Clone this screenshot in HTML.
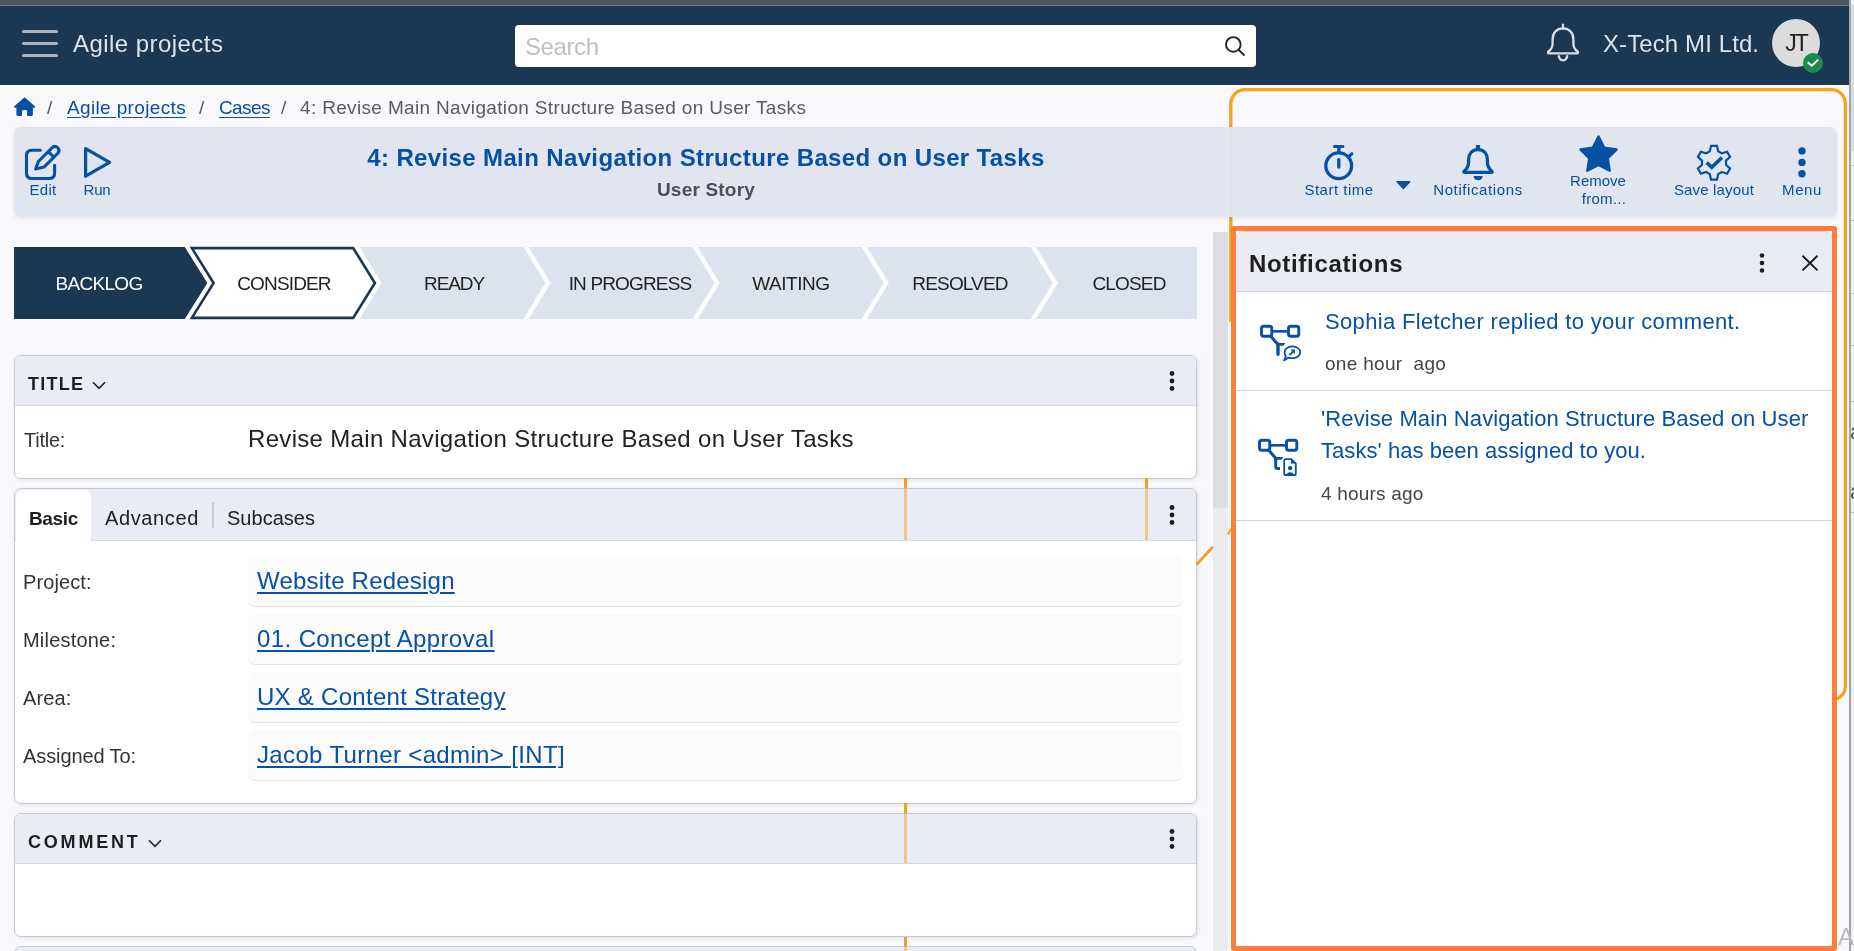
<!DOCTYPE html>
<html><head><meta charset="utf-8"><title>Agile projects</title>
<style>
html,body{margin:0;padding:0;width:1854px;height:951px;overflow:hidden;background:#f9f9fd;font-family:"Liberation Sans",sans-serif;}
.t{position:absolute;white-space:pre;will-change:transform;}
svg{overflow:visible}
</style></head><body>
<div style="position:absolute;left:0px;top:0px;width:1849px;height:5px;background:#4a5964"></div>
<div style="position:absolute;left:0px;top:5px;width:1849px;height:1px;background:#74818a"></div>
<div style="position:absolute;left:0px;top:6px;width:1849px;height:79px;background:#1a3853"></div>
<div style="position:absolute;left:0px;top:85px;width:1849px;height:1px;background:#ffffff"></div>
<div style="position:absolute;left:21.5px;top:30.0px;width:36px;height:3px;background:#a9b4bf;border-radius:2px"></div>
<div style="position:absolute;left:21.5px;top:42.0px;width:36px;height:3px;background:#a9b4bf;border-radius:2px"></div>
<div style="position:absolute;left:21.5px;top:54.0px;width:36px;height:3px;background:#a9b4bf;border-radius:2px"></div>
<div class="t" style="left:73.0px;top:31.7px;font-size:24px;line-height:24px;color:#dde3ea;letter-spacing:0.45px;">Agile projects</div>
<div style="position:absolute;left:515px;top:25px;width:741px;height:42px;background:#fff;border-radius:4px"></div>
<div class="t" style="left:525.0px;top:34.7px;font-size:24px;line-height:24px;color:#bfbfbf;letter-spacing:-0.4px;">Search</div>
<svg style="position:absolute;left:1220px;top:32px;" width="30" height="30" viewBox="0 0 30 30"><circle cx="13.3" cy="12.4" r="7.3" fill="none" stroke="#222" stroke-width="1.9"/><line x1="18.6" y1="17.7" x2="24.5" y2="23.5" stroke="#222" stroke-width="1.9"/></svg>
<svg style="position:absolute;left:1545px;top:22px;" width="36" height="42" viewBox="0 0 36 42"><path d="M18 6.4 C11.5 6.4 7.6 11 7.6 17.5 V21.5 C7.6 25.5 5.5 28 3.5 29.5 C2.6 30.2 2.9 31.4 4 31.4 H32 C33.1 31.4 33.4 30.2 32.5 29.5 C30.5 28 28.4 25.5 28.4 21.5 V17.5 C28.4 11 24.5 6.4 18 6.4 Z" fill="none" stroke="#d8dee5" stroke-width="2.3" stroke-linejoin="round"/><line x1="18" y1="2.6" x2="18" y2="6.4" stroke="#d8dee5" stroke-width="2.3" stroke-linecap="round"/><path d="M13.8 34.2 C14.2 37 15.9 38.3 18 38.3 C20.1 38.3 21.8 37 22.2 34.2" fill="none" stroke="#d8dee5" stroke-width="2.3" stroke-linecap="round"/></svg>
<div class="t" style="left:1603.0px;top:31.7px;font-size:24px;line-height:24px;color:#dde3ea;letter-spacing:0.1px;">X-Tech MI Ltd.</div>
<div style="position:absolute;left:1772px;top:19px;width:48px;height:48px;background:#dcdcdc;border-radius:50%"></div>
<div class="t" style="left:1765.5px;width:60px;text-align:center;top:31.5px;font-size:23px;line-height:23px;color:#1e1e1e;letter-spacing:-2px;">JT</div>
<div style="position:absolute;left:1803.2px;top:53.3px;width:20px;height:20px;background:#1c8a50;border-radius:50%"></div>
<svg style="position:absolute;left:1803.2px;top:53.3px;" width="20" height="20" viewBox="0 0 20 20"><path d="M5.3 9.8 L8.7 12.7 L14.6 7.2" fill="none" stroke="#fff" stroke-width="1.9" stroke-linecap="round" stroke-linejoin="round"/></svg>
<div style="position:absolute;left:1849px;top:0px;width:5px;height:951px;background:#f1f1f4"></div>
<div style="position:absolute;left:1851px;top:5px;width:3px;height:146px;background:#dcdce2"></div>
<div style="position:absolute;left:1849px;top:0px;width:2px;height:951px;background:#a4a4a8"></div>
<svg style="position:absolute;left:13px;top:96px;" width="24" height="22" viewBox="0 0 24 22"><path d="M11.6 1.2 L1.3 10.2 C0.6 10.9 1 11.8 2 11.8 H3.4 V18.6 C3.4 19.4 4 20 4.8 20 H9 V15.5 C9 14.6 9.7 14 10.5 14 H12.6 C13.4 14 14.1 14.6 14.1 15.5 V20 H18.5 C19.3 20 19.9 19.4 19.9 18.6 V11.8 H21.3 C22.3 11.8 22.6 10.9 21.9 10.2 Z" fill="#0650a6"/></svg>
<div class="t" style="left:47.0px;top:97.9px;font-size:19px;line-height:19px;color:#5a5a5a;">/</div>
<div class="t" style="left:67.0px;top:97.9px;font-size:19px;line-height:19px;color:#0650a6;letter-spacing:0.36px;text-decoration:underline;text-underline-offset:3px;">Agile projects</div>
<div class="t" style="left:199.0px;top:97.9px;font-size:19px;line-height:19px;color:#5a5a5a;">/</div>
<div class="t" style="left:218.5px;top:97.9px;font-size:19px;line-height:19px;color:#0650a6;letter-spacing:-0.6px;text-decoration:underline;text-underline-offset:3px;">Cases</div>
<div class="t" style="left:281.0px;top:97.9px;font-size:19px;line-height:19px;color:#5a5a5a;">/</div>
<div class="t" style="left:300.0px;top:97.9px;font-size:19px;line-height:19px;color:#5b5b5b;letter-spacing:0.34px;">4: Revise Main Navigation Structure Based on User Tasks</div>
<svg style="position:absolute;left:0px;top:0px;pointer-events:none" width="1854" height="951" viewBox="0 0 1854 951"><path d="M1230.8 322 V103.7 A14 14 0 0 1 1244.8 89.7 H1831.4 A14 14 0 0 1 1845.4 103.7 V686 A14 14 0 0 1 1831.4 700 H1820" fill="none" stroke="#f5a21e" stroke-width="3.3"/></svg>
<div style="position:absolute;left:14px;top:127px;width:1823px;height:90px;background:#e1e5ef;border-radius:7px;box-shadow:0 2px 4px rgba(40,50,80,0.10)"></div>
<div style="position:absolute;left:1229px;top:127px;width:3px;height:90px;background:#dfe1e7"></div>
<svg style="position:absolute;left:20px;top:140px;" width="46" height="44" viewBox="0 0 46 44"><path d="M20.4 10.3 H11.8 C8.5 10.3 6.5 12.3 6.5 15.6 V33.2 C6.5 36.5 8.5 38.5 11.8 38.5 H29.3 C32.6 38.5 34.6 36.5 34.6 33.2 V25.2" fill="none" stroke="#0650a6" stroke-width="3.1" stroke-linecap="round"/><path d="M32.5 7.4 A4 4 0 0 1 38.1 13.0 L24.0 27.1 L15.6 29.0 L18.4 21.5 Z" fill="none" stroke="#0650a6" stroke-width="3.1" stroke-linejoin="round"/><line x1="28.3" y1="11.6" x2="33.9" y2="17.2" stroke="#0650a6" stroke-width="3"/></svg>
<div class="t" style="left:13.0px;width:60px;text-align:center;top:182.3px;font-size:15px;line-height:15px;color:#0650a6;letter-spacing:0.3px;">Edit</div>
<svg style="position:absolute;left:78px;top:142px;" width="40" height="40" viewBox="0 0 40 40"><path d="M7.6 6.6 L31.6 20.4 L7.6 34.2 Z" fill="none" stroke="#0650a6" stroke-width="3.2" stroke-linejoin="round"/></svg>
<div class="t" style="left:67.0px;width:60px;text-align:center;top:182.3px;font-size:15px;line-height:15px;color:#0650a6;letter-spacing:-0.2px;">Run</div>
<div class="t" style="left:256.3px;width:900px;text-align:center;top:146.0px;font-size:24px;line-height:24px;color:#0650a6;font-weight:700;letter-spacing:0.37px;">4: Revise Main Navigation Structure Based on User Tasks</div>
<div class="t" style="left:556.4px;width:300px;text-align:center;top:179.9px;font-size:19px;line-height:19px;color:#4b4f56;font-weight:700;letter-spacing:0.2px;">User Story</div>
<svg style="position:absolute;left:1318px;top:140px;" width="44" height="44" viewBox="0 0 44 44"><circle cx="20.7" cy="25.8" r="12.9" fill="none" stroke="#0650a6" stroke-width="3.3"/><line x1="16.5" y1="6.4" x2="24.9" y2="6.4" stroke="#0650a6" stroke-width="3" stroke-linecap="round"/><line x1="20.85" y1="6.4" x2="20.85" y2="12" stroke="#0650a6" stroke-width="3.4"/><line x1="20.8" y1="19.6" x2="20.8" y2="27.1" stroke="#0650a6" stroke-width="3.3" stroke-linecap="round"/><line x1="30.8" y1="16.6" x2="33.8" y2="13.8" stroke="#0650a6" stroke-width="3.2" stroke-linecap="round"/></svg>
<div class="t" style="left:1278.5px;width:120px;text-align:center;top:182.3px;font-size:15px;line-height:15px;color:#0650a6;letter-spacing:0.5px;">Start time</div>
<svg style="position:absolute;left:1395px;top:180px;" width="17" height="10" viewBox="0 0 17 10"><path d="M2 1.7 H14.8 L8.4 8.4 Z" fill="#0650a6" stroke="#0650a6" stroke-width="1.4" stroke-linejoin="round"/></svg>
<svg style="position:absolute;left:1456px;top:140px;" width="44" height="44" viewBox="0 0 44 44"><path d="M22 9.6 C15.8 9.6 12.6 14 12.6 19.5 V22.5 C12.6 26.5 10.2 29.3 8.3 31.2 C7.5 32 7.6 32.3 8.6 32.3 H35.4 C36.4 32.3 36.5 32 35.7 31.2 C33.8 29.3 31.4 26.5 31.4 22.5 V19.5 C31.4 14 28.2 9.6 22 9.6 Z" fill="none" stroke="#0650a6" stroke-width="3.3" stroke-linejoin="round"/><rect x="19.9" y="4.9" width="4.2" height="5" rx="0.6" fill="#0650a6"/><path d="M17.6 35.9 H26.6 C26.6 38.5 24.6 40.3 22.1 40.3 C19.6 40.3 17.6 38.5 17.6 35.9 Z" fill="#0650a6"/></svg>
<div class="t" style="left:1408.0px;width:140px;text-align:center;top:182.3px;font-size:15px;line-height:15px;color:#0650a6;letter-spacing:0.6px;">Notifications</div>
<svg style="position:absolute;left:1578px;top:134px;" width="42" height="40" viewBox="0 0 42 40"><path d="M20.5 2.5 L26.2 13.8 L38.5 15.6 L29.6 24.3 L31.7 36.6 L20.5 30.8 L9.3 36.6 L11.4 24.3 L2.5 15.6 L14.8 13.8 Z" fill="#0650a6" stroke="#0650a6" stroke-width="2.5" stroke-linejoin="round"/></svg>
<div class="t" style="left:1538.0px;width:120px;text-align:center;top:173.3px;font-size:15px;line-height:15px;color:#0650a6;">Remove</div>
<div class="t" style="left:1544.0px;width:120px;text-align:center;top:191.3px;font-size:15px;line-height:15px;color:#0650a6;letter-spacing:0.3px;">from...</div>
<svg style="position:absolute;left:1692px;top:140px;" width="44" height="44" viewBox="0 0 44 44"><path d="M17.83 11.24 L19.03 5.86 L24.97 5.86 L26.17 11.24 L29.84 13.35 L35.10 11.71 L38.07 16.85 L34.01 20.58 L34.01 24.82 L38.07 28.55 L35.10 33.69 L29.84 32.05 L26.17 34.16 L24.97 39.54 L19.03 39.54 L17.83 34.16 L14.16 32.05 L8.90 33.69 L5.93 28.55 L9.99 24.82 L9.99 20.58 L5.93 16.85 L8.90 11.71 L14.16 13.35 Z" fill="none" stroke="#0650a6" stroke-width="2.2" stroke-linejoin="miter"/><path d="M14.7 22.6 L19.8 27.3 L30.0 17.5" fill="none" stroke="#0650a6" stroke-width="3.6"/></svg>
<div class="t" style="left:1654.0px;width:120px;text-align:center;top:182.3px;font-size:15px;line-height:15px;color:#0650a6;letter-spacing:0.15px;">Save layout</div>
<svg style="position:absolute;left:1796px;top:145px;" width="12" height="34" viewBox="0 0 12 34"><circle cx="6" cy="5.9" r="3.7" fill="#0650a6"/><circle cx="6" cy="17.4" r="3.7" fill="#0650a6"/><circle cx="6" cy="28.7" r="3.7" fill="#0650a6"/></svg>
<div class="t" style="left:1762.0px;width:80px;text-align:center;top:182.3px;font-size:15px;line-height:15px;color:#0650a6;letter-spacing:0.6px;">Menu</div>
<svg style="position:absolute;left:0;top:0" width="1230" height="330"><rect x="14" y="247" width="1183" height="72" fill="#fff"/><path d="M14 247 H184.8 L207.4 283 L184.8 319 H14 Z" fill="#1a3853"/><path d="M191.9 248.1 H353.2 L374.9 283 L353.2 317.9 H191.9 L213.6 283 Z" fill="#fff" stroke="#1a3853" stroke-width="2.6" stroke-linejoin="miter"/><path d="M359.5 247 H523.4 L545.5 283 L523.4 319 H359.5 L381.6 283 Z" fill="#dde3ee"/><path d="M528.6 247 H692.5 L714.6 283 L692.5 319 H528.6 L550.7 283 Z" fill="#dde3ee"/><path d="M697.7 247 H861.6 L883.7 283 L861.6 319 H697.7 L719.8 283 Z" fill="#dde3ee"/><path d="M866.8 247 H1030.7 L1052.8 283 L1030.7 319 H866.8 L888.9 283 Z" fill="#dde3ee"/><path d="M1035.9 247 H1197 V319 H1035.9 L1058.0 283 Z" fill="#dde3ee"/></svg>
<div class="t" style="left:18.7px;width:160px;text-align:center;top:273.9px;font-size:19px;line-height:19px;color:#ffffff;letter-spacing:-0.7px;">BACKLOG</div>
<div class="t" style="left:184.2px;width:200px;text-align:center;top:273.9px;font-size:19px;line-height:19px;color:#222222;letter-spacing:-0.85px;">CONSIDER</div>
<div class="t" style="left:353.7px;width:200px;text-align:center;top:273.9px;font-size:19px;line-height:19px;color:#222222;letter-spacing:-1.1px;">READY</div>
<div class="t" style="left:529.5px;width:200px;text-align:center;top:273.9px;font-size:19px;line-height:19px;color:#222222;letter-spacing:-0.85px;">IN PROGRESS</div>
<div class="t" style="left:691.3px;width:200px;text-align:center;top:273.9px;font-size:19px;line-height:19px;color:#222222;letter-spacing:-0.45px;">WAITING</div>
<div class="t" style="left:860.0px;width:200px;text-align:center;top:273.9px;font-size:19px;line-height:19px;color:#222222;letter-spacing:-0.85px;">RESOLVED</div>
<div class="t" style="left:1029.0px;width:200px;text-align:center;top:273.9px;font-size:19px;line-height:19px;color:#222222;letter-spacing:-0.85px;">CLOSED</div>
<div style="position:absolute;left:1213px;top:232px;width:15px;height:719px;background:#ebebef"></div>
<div style="position:absolute;left:1213px;top:232px;width:15px;height:276px;background:#dcdce1"></div>
<div style="position:absolute;left:14px;top:355px;width:1183px;height:124px;box-sizing:border-box;border:1px solid #c6cad3;border-radius:7px;background:#fff;box-shadow:1px 1px 4px rgba(40,50,80,0.13);overflow:hidden"></div>
<div style="position:absolute;left:15px;top:356px;width:1181px;height:49px;background:#e9ecf5;border-bottom:1px solid #d3d7df;border-radius:6px 6px 0 0"></div>
<div class="t" style="left:27.5px;top:374.8px;font-size:18px;line-height:18px;color:#1e1e1e;font-weight:700;letter-spacing:1.25px;">TITLE</div>
<svg style="position:absolute;left:92px;top:380.5px;" width="14" height="9" viewBox="0 0 14 9"><path d="M1 1.2 L7 7.4 L13 1.2" fill="none" stroke="#222" stroke-width="1.6"/></svg>
<svg style="position:absolute;left:1166.3px;top:366.5px;" width="12" height="28" viewBox="0 0 12 28"><circle cx="6" cy="6.5" r="2.4" fill="#1e1e1e"/><circle cx="6" cy="14.0" r="2.4" fill="#1e1e1e"/><circle cx="6" cy="21.5" r="2.4" fill="#1e1e1e"/></svg>
<div class="t" style="left:23.5px;top:430.1px;font-size:20px;line-height:20px;color:#333333;letter-spacing:-0.25px;">Title:</div>
<div class="t" style="left:247.5px;top:427.4px;font-size:24px;line-height:24px;color:#222222;letter-spacing:0.32px;">Revise Main Navigation Structure Based on User Tasks</div>
<div style="position:absolute;left:14px;top:488px;width:1183px;height:316px;box-sizing:border-box;border:1px solid #c6cad3;border-radius:7px;background:#fff;box-shadow:1px 1px 4px rgba(40,50,80,0.13)"></div>
<div style="position:absolute;left:15px;top:489px;width:1181px;height:51px;background:#e9ecf5;border-bottom:1px solid #d3d7df;border-radius:6px 6px 0 0"></div>
<div style="position:absolute;left:15.5px;top:490px;width:75.5px;height:51px;background:#fff;border-radius:7px 7px 0 0"></div>
<div class="t" style="left:29.3px;top:508.5px;font-size:19px;line-height:19px;color:#1e1e1e;font-weight:700;letter-spacing:-0.35px;">Basic</div>
<div class="t" style="left:104.5px;top:507.7px;font-size:20px;line-height:20px;color:#222222;letter-spacing:0.62px;">Advanced</div>
<div style="position:absolute;left:211.5px;top:502px;width:2.5px;height:26px;background:#c9cdd6"></div>
<div class="t" style="left:226.5px;top:507.7px;font-size:20px;line-height:20px;color:#222222;letter-spacing:0.02px;">Subcases</div>
<svg style="position:absolute;left:1166.2px;top:501px;" width="12" height="28" viewBox="0 0 12 28"><circle cx="6" cy="6.5" r="2.4" fill="#1e1e1e"/><circle cx="6" cy="14.0" r="2.4" fill="#1e1e1e"/><circle cx="6" cy="21.5" r="2.4" fill="#1e1e1e"/></svg>
<div style="position:absolute;left:248px;top:556px;width:935px;height:51px;box-sizing:border-box;background:#fbfbfc;border-bottom:1px solid #e1e4ec;border-radius:7px"></div>
<div class="t" style="left:23.0px;top:572.3px;font-size:20px;line-height:20px;color:#333333;letter-spacing:0.1px;">Project:</div>
<div class="t" style="left:257.0px;top:569.0px;font-size:24px;line-height:24px;color:#0650a6;letter-spacing:0.21px;text-decoration:underline;text-decoration-thickness:2px;text-underline-offset:3px;">Website Redesign</div>
<div style="position:absolute;left:248px;top:614px;width:935px;height:51px;box-sizing:border-box;background:#fbfbfc;border-bottom:1px solid #e1e4ec;border-radius:7px"></div>
<div class="t" style="left:23.0px;top:630.3px;font-size:20px;line-height:20px;color:#333333;letter-spacing:0.2px;">Milestone:</div>
<div class="t" style="left:257.0px;top:627.0px;font-size:24px;line-height:24px;color:#0650a6;letter-spacing:0.4px;text-decoration:underline;text-decoration-thickness:2px;text-underline-offset:3px;">01. Concept Approval</div>
<div style="position:absolute;left:248px;top:672px;width:935px;height:51px;box-sizing:border-box;background:#fbfbfc;border-bottom:1px solid #e1e4ec;border-radius:7px"></div>
<div class="t" style="left:23.0px;top:688.3px;font-size:20px;line-height:20px;color:#333333;letter-spacing:0.1px;">Area:</div>
<div class="t" style="left:257.0px;top:685.0px;font-size:24px;line-height:24px;color:#0650a6;letter-spacing:0.28px;text-decoration:underline;text-decoration-thickness:2px;text-underline-offset:3px;">UX &amp; Content Strategy</div>
<div style="position:absolute;left:248px;top:730px;width:935px;height:51px;box-sizing:border-box;background:#fbfbfc;border-bottom:1px solid #e1e4ec;border-radius:7px"></div>
<div class="t" style="left:23.0px;top:746.3px;font-size:20px;line-height:20px;color:#333333;letter-spacing:-0.1px;">Assigned To:</div>
<div class="t" style="left:257.0px;top:743.0px;font-size:24px;line-height:24px;color:#0650a6;letter-spacing:0.35px;text-decoration:underline;text-decoration-thickness:2px;text-underline-offset:3px;">Jacob Turner &lt;admin&gt; [INT]</div>
<div style="position:absolute;left:14px;top:813px;width:1183px;height:124px;box-sizing:border-box;border:1px solid #c6cad3;border-radius:7px;background:#fff;box-shadow:1px 1px 4px rgba(40,50,80,0.13)"></div>
<div style="position:absolute;left:15px;top:814px;width:1181px;height:49px;background:#e9ecf5;border-bottom:1px solid #d3d7df;border-radius:6px 6px 0 0"></div>
<div class="t" style="left:27.8px;top:833.0px;font-size:18px;line-height:18px;color:#1e1e1e;font-weight:700;letter-spacing:2.8px;">COMMENT</div>
<svg style="position:absolute;left:148px;top:839px;" width="14" height="9" viewBox="0 0 14 9"><path d="M1 1.2 L7 7.4 L13 1.2" fill="none" stroke="#222" stroke-width="1.6"/></svg>
<svg style="position:absolute;left:1166.3px;top:825px;" width="12" height="28" viewBox="0 0 12 28"><circle cx="6" cy="6.5" r="2.4" fill="#1e1e1e"/><circle cx="6" cy="14.0" r="2.4" fill="#1e1e1e"/><circle cx="6" cy="21.5" r="2.4" fill="#1e1e1e"/></svg>
<div style="position:absolute;left:14px;top:946px;width:1183px;height:20px;box-sizing:border-box;border:1px solid #c6cad3;border-radius:7px;background:#e9ecf5"></div>
<div style="position:absolute;left:904.2px;top:478px;width:3px;height:10px;background:#f0a020"></div>
<div style="position:absolute;left:904.2px;top:488px;width:3px;height:52px;background:rgba(236,165,50,0.55)"></div>
<div style="position:absolute;left:1144.6px;top:478px;width:3px;height:10px;background:#f0a020"></div>
<div style="position:absolute;left:1144.6px;top:488px;width:3px;height:52px;background:rgba(236,165,50,0.55)"></div>
<div style="position:absolute;left:904.2px;top:803px;width:3px;height:10px;background:#f0a020"></div>
<div style="position:absolute;left:904.2px;top:813px;width:3px;height:50px;background:rgba(236,165,50,0.55)"></div>
<div style="position:absolute;left:904.2px;top:937px;width:3px;height:9px;background:#f0a020"></div>
<div style="position:absolute;left:904.2px;top:946px;width:3px;height:5px;background:rgba(236,165,50,0.55)"></div>
<svg style="position:absolute;left:0px;top:0px;pointer-events:none" width="1240" height="600" viewBox="0 0 1240 600"><line x1="1196.4" y1="564.7" x2="1212.9" y2="546.8" stroke="#f0a020" stroke-width="2.8"/><line x1="1228" y1="534.5" x2="1231.5" y2="528.3" stroke="#f0a020" stroke-width="2.2"/></svg>
<div style="position:absolute;left:1231px;top:226px;width:606px;height:725px;box-sizing:border-box;border:5px solid #ff7e3e;border-radius:3px;background:#fff"></div>
<div style="position:absolute;left:1236px;top:231px;width:596px;height:61px;box-sizing:border-box;background:#e9ecf5;border-top:1px solid #cfd3dc;border-bottom:1px solid #cfd3dc;border-radius:7px 7px 0 0"></div>
<div class="t" style="left:1248.5px;top:251.5px;font-size:24px;line-height:24px;color:#1e1e1e;font-weight:700;letter-spacing:0.68px;">Notifications</div>
<svg style="position:absolute;left:1756px;top:248.89999999999998px;" width="12" height="28" viewBox="0 0 12 28"><circle cx="6" cy="6.5" r="2.3" fill="#1e1e1e"/><circle cx="6" cy="14.0" r="2.3" fill="#1e1e1e"/><circle cx="6" cy="21.5" r="2.3" fill="#1e1e1e"/></svg>
<svg style="position:absolute;left:1800px;top:253px;" width="20" height="20" viewBox="0 0 20 20"><path d="M2.5 2.7 L17.5 17.4 M17.5 2.7 L2.5 17.4" stroke="#1e1e1e" stroke-width="2"/></svg>
<div style="position:absolute;left:1236px;top:390px;width:596px;height:1px;background:#cfd3dc"></div>
<div style="position:absolute;left:1236px;top:520px;width:596px;height:1px;background:#cfd3dc"></div>
<svg style="position:absolute;left:1254px;top:318px;" width="52" height="48" viewBox="0 0 52 48"><rect x="7.5" y="8.2" width="10.3" height="10.1" rx="2.2" fill="none" stroke="#0650a6" stroke-width="2.9"/><rect x="34.5" y="8.2" width="10.3" height="10.1" rx="2.2" fill="none" stroke="#0650a6" stroke-width="2.9"/><line x1="19" y1="13.35" x2="33.2" y2="13.35" stroke="#0650a6" stroke-width="2.6"/><path d="M16.6 18 L23.9 26.4" fill="none" stroke="#0650a6" stroke-width="3"/><path d="M22.4 25 H31.4 L29.4 27.7 H22.4 Z" fill="#0650a6"/><path d="M24 26 V36.2" fill="none" stroke="#0650a6" stroke-width="3.4" stroke-linecap="round"/><path d="M38.4 28.4 C42.8 28.4 46.2 31 46.2 34.3 C46.2 37.6 42.8 40.2 38.4 40.2 C37.1 40.2 35.8 40 34.7 39.6 L30 42.4 L31.9 38.4 C31 37.3 30.6 35.8 30.6 34.3 C30.6 31 34 28.4 38.4 28.4 Z" fill="none" stroke="#0650a6" stroke-width="1.8" stroke-linejoin="round"/><line x1="35.4" y1="37.2" x2="39.4" y2="33.2" stroke="#0650a6" stroke-width="1.9"/><path d="M36.4 31.6 H41 V36.2 Z" fill="#0650a6"/></svg>
<div class="t" style="left:1325.3px;top:310.6px;font-size:22px;line-height:22px;color:#0650a6;letter-spacing:0.33px;">Sophia Fletcher replied to your comment.</div>
<div class="t" style="left:1325.3px;top:353.6px;font-size:19px;line-height:19px;color:#444444;letter-spacing:0.3px;">one hour  ago</div>
<svg style="position:absolute;left:1252px;top:432px;" width="52" height="48" viewBox="0 0 52 48"><rect x="7.5" y="8.2" width="10.3" height="10.1" rx="2.2" fill="none" stroke="#0650a6" stroke-width="2.9"/><rect x="34.5" y="8.2" width="10.3" height="10.1" rx="2.2" fill="none" stroke="#0650a6" stroke-width="2.9"/><line x1="19" y1="13.35" x2="33.2" y2="13.35" stroke="#0650a6" stroke-width="2.6"/><path d="M16.6 18 L23.9 26.4" fill="none" stroke="#0650a6" stroke-width="3"/><path d="M22.4 25 H31.4 L29.4 27.7 H22.4 Z" fill="#0650a6"/><path d="M23.7 26 V34.6 C23.7 36 24.4 36.6 25.8 36.6 H28" fill="none" stroke="#0650a6" stroke-width="3"/><path d="M32.2 28.5 C32.2 27.7 32.7 27.2 33.5 27.2 H39.2 L43.8 31.3 V42 C43.8 42.6 43.3 43 42.7 43 H33.3 C32.7 43 32.2 42.6 32.2 42 Z" fill="none" stroke="#0650a6" stroke-width="1.8" stroke-linejoin="round"/><path d="M39 27.2 V31.5 H43.8 Z" fill="#0650a6"/><circle cx="38.1" cy="36.1" r="2.2" fill="#0650a6"/><path d="M34.8 42.8 C35 41 36.2 40.3 38.1 40.3 C40 40.3 41.2 41 41.4 42.8 Z" fill="#0650a6"/></svg>
<div class="t" style="left:1321.1px;top:408.2px;font-size:22px;line-height:22px;color:#0650a6;letter-spacing:0.11px;">'Revise Main Navigation Structure Based on User</div>
<div class="t" style="left:1321.1px;top:439.9px;font-size:22px;line-height:22px;color:#0650a6;letter-spacing:0.05px;">Tasks' has been assigned to you.</div>
<div class="t" style="left:1321.1px;top:484.3px;font-size:19px;line-height:19px;color:#444444;letter-spacing:0.2px;">4 hours ago</div>
<div style="position:absolute;left:1851px;top:165px;width:3px;height:1px;background:#c4c4ca"></div>
<div style="position:absolute;left:1851px;top:220px;width:3px;height:1px;background:#c4c4ca"></div>
<div style="position:absolute;left:1851px;top:293px;width:3px;height:1px;background:#c4c4ca"></div>
<div style="position:absolute;left:1851px;top:345px;width:3px;height:1px;background:#c4c4ca"></div>
<div style="position:absolute;left:1851px;top:401px;width:3px;height:1px;background:#c4c4ca"></div>
<div style="position:absolute;left:1851px;top:512px;width:3px;height:1px;background:#c4c4ca"></div>
<div class="t" style="left:1850.0px;top:421.4px;font-size:22px;line-height:22px;color:#555;overflow:hidden;width:4px;">a</div>
<div class="t" style="left:1850.0px;top:481.4px;font-size:22px;line-height:22px;color:#555;overflow:hidden;width:4px;">a</div>
<div class="t" style="left:1838.0px;top:924.7px;font-size:24px;line-height:24px;color:#b8b8bc;overflow:hidden;width:16px;">A</div>
</body></html>
